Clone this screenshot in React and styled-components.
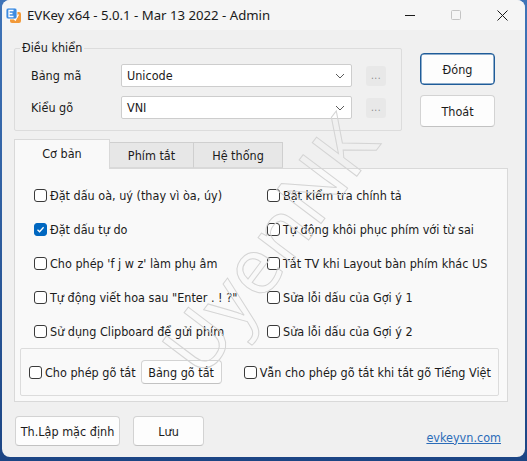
import { Fragment } from "react";
import styled, { createGlobalStyle } from "styled-components";

const GlobalStyle = createGlobalStyle`
  html, body {
    margin: 0;
    padding: 0;
  }
  body {
    width: 527px;
    height: 461px;
    overflow: hidden;
    background: linear-gradient(180deg, #3f74b8 0%, #1c4584 100%);
    font-family: "DejaVu Sans Condensed", "Noto Sans", sans-serif;
    font-size: 12.5px;
    color: #1b1b1b;
  }
`;

const Window = styled.div`
  width: 523px;
  height: 457px;
  margin-left: 2px;
  background: #f0f0f0;
  border-radius: 8px;
  overflow: hidden;
  display: flex;
  flex-direction: column;
  position: relative;
`;

const TitleBar = styled.div`
  height: 30px;
  flex-shrink: 0;
  display: flex;
  align-items: center;
  background: #f5f5f5;
  padding-left: 3px;
`;

const TitleText = styled.span`
  margin-left: 5px;
  font-family: "Noto Sans", sans-serif;
  font-size: 13.2px;
  color: #1a1a1a;
  flex: 1;
`;

const Controls = styled.div`
  display: flex;
  height: 30px;
`;

const ControlBtn = styled.div`
  width: 46px;
  height: 30px;
  display: flex;
  align-items: center;
  justify-content: center;
  color: ${(p) => (p.$disabled ? "#c4c4c4" : "#1a1a1a")};
`;

const Body = styled.div`
  padding: 10px 0 0 12px;
  display: flex;
  flex-direction: column;
`;

const TopRow = styled.div`
  display: flex;
  align-items: flex-start;
`;

const GroupBox = styled.fieldset`
  box-sizing: border-box;
  width: 388px;
  height: 91px;
  margin: 0;
  padding: 0;
  border: 1px solid #dcdcdc;
  border-radius: 2px;
`;

const Legend = styled.legend`
  margin-left: 5px;
  padding: 0 2px;
  line-height: 16px;
`;

const FieldRow = styled.div`
  display: flex;
  align-items: center;
  height: 23px;
  padding-left: 16px;
  margin-top: ${(p) => p.$top}px;
`;

const FieldLabel = styled.span`
  width: 90px;
`;

const Combo = styled.div`
  box-sizing: border-box;
  width: 231px;
  height: 23px;
  background: #fff;
  border: 1px solid #cdcdcd;
  border-radius: 2px;
  display: flex;
  align-items: center;
  justify-content: space-between;
  padding: 0 6px 0 5px;
`;

const DotsBtn = styled.div`
  width: 20px;
  height: 20px;
  margin-left: 14px;
  background: #e8e8e8;
  border-radius: 3px;
  color: #8a8a8a;
  font-size: 10px;
  display: flex;
  align-items: center;
  justify-content: center;
  letter-spacing: 0.5px;
`;

const SideButtons = styled.div`
  margin: 13px 0 0 18px;
  display: flex;
  flex-direction: column;
  gap: 10px;
`;

const Button = styled.div`
  box-sizing: border-box;
  width: ${(p) => p.$w}px;
  height: ${(p) => p.$h}px;
  margin-left: ${(p) => p.$ml || 0}px;
  background: #fdfdfd;
  border: 1px solid ${(p) => (p.$primary ? "#1f5c99" : "#d3d3d3")};
  border-bottom-color: ${(p) => (p.$primary ? "#1f5c99" : "#c2c2c2")};
  box-shadow: ${(p) => (p.$primary ? "inset 0 0 0 0.5px #1f5c99" : "none")};
  border-radius: 4px;
  display: flex;
  align-items: center;
  justify-content: center;
  flex-shrink: 0;
`;

const TabBar = styled.div`
  margin-top: 8px;
  height: 29px;
  display: flex;
  align-items: flex-end;
`;

const Tab = styled.div`
  box-sizing: border-box;
  width: ${(p) => p.$w}px;
  height: ${(p) => (p.$active ? 30 : 26)}px;
  margin-bottom: ${(p) => (p.$active ? -1 : 0)}px;
  background: ${(p) => (p.$active ? "#f9f9f9" : "#e7e7e7")};
  border: 1px solid ${(p) => (p.$active ? "#d9d9d9" : "#cfcfcf")};
  border-bottom: ${(p) => (p.$active ? "none" : "1px solid #d9d9d9")};
  border-left: ${(p) => (p.$first || p.$active ? undefined : "none")};
  display: flex;
  align-items: center;
  justify-content: center;
  padding-bottom: ${(p) => (p.$active ? 2 : 0)}px;
  position: relative;
  z-index: ${(p) => (p.$active ? 2 : 1)};
`;

const Panel = styled.div`
  box-sizing: border-box;
  width: 494px;
  height: 234px;
  background: #f9f9f9;
  border: 1px solid #d9d9d9;
  padding: 16px 5px 0 5px;
`;

const OptionGrid = styled.div`
  display: grid;
  grid-template-columns: 233px 1fr;
  row-gap: 14px;
  padding-left: 14px;
`;

const Option = styled.label`
  display: flex;
  align-items: center;
  height: 20px;
  gap: 3px;
  white-space: nowrap;
`;

const Box = styled.span`
  box-sizing: border-box;
  width: 13px;
  height: 13px;
  flex-shrink: 0;
  border-radius: 3px;
  border: 1px solid ${(p) => (p.$checked ? "#0067c0" : "#3a3a3a")};
  background: ${(p) => (p.$checked ? "#0067c0" : "#fff")};
  display: flex;
  align-items: center;
  justify-content: center;
`;

const InnerGroup = styled.div`
  box-sizing: border-box;
  margin-top: 7px;
  height: 48px;
  width: 479px;
  border: 1px solid #dcdcdc;
  border-radius: 2px;
  display: flex;
  align-items: center;
  padding-left: 8px;
`;

const Spacer = styled.span`
  width: ${(p) => p.$w}px;
`;

const Watermark = styled.div`
  position: absolute;
  left: 266px;
  top: 244px;
  transform: translate(-50%, -50%) rotate(-53deg);
  font-family: "Noto Sans", sans-serif;
  font-size: 78px;
  line-height: 1;
  color: transparent;
  -webkit-text-stroke: 1px #d4d4d4;
  pointer-events: none;
  white-space: nowrap;
`;

const BottomRow = styled.div`
  margin-top: 14px;
  display: flex;
  align-items: center;
  gap: 13px;
  padding-left: 1px;
  padding-right: 24px;
`;

const Link = styled.a`
  margin-left: auto;
  margin-top: 12px;
  color: #2b6cb8;
  text-decoration: underline;
`;

const Check = ({ checked, children }) => (
  <Option>
    <Box $checked={checked}>
      {checked && (
        <svg width="9" height="9" viewBox="0 0 9 9">
          <path d="M1.5 4.7 L3.6 6.7 L7.6 2.3" fill="none" stroke="#fff" strokeWidth="1.3" />
        </svg>
      )}
    </Box>
    {children}
  </Option>
);

const Chevron = () => (
  <svg width="10" height="6" viewBox="0 0 10 6">
    <path d="M1 1 L5 5 L9 1" fill="none" stroke="#5a5a5a" strokeWidth="1" />
  </svg>
);

const AppIcon = () => (
  <svg width="17" height="17" viewBox="0 0 17 17">
    <rect x="5" y="5" width="11" height="11" rx="2" fill="#f29a3a" />
    <path d="M8 10 L10.3 13 L13.5 7.5" fill="none" stroke="#fff" strokeWidth="1.4" />
    <rect x="1" y="1" width="11" height="11" rx="2" fill="#3d8be0" stroke="#fff" strokeWidth="0.8" />
    <path d="M8.5 3.5 H4 V9.5 H8.5 M4 6.5 H7.5" fill="none" stroke="#fff" strokeWidth="1.3" />
  </svg>
);

const App = () => {
  const left = [
    { text: "Đặt dấu oà, uý (thay vì òa, úy)" },
    { text: "Đặt dấu tự do", checked: true },
    { text: "Cho phép 'f j w z' làm phụ âm" },
    { text: 'Tự động viết hoa sau "Enter . ! ?"' },
    { text: "Sử dụng Clipboard để gửi phím" },
  ];
  const right = [
    "Bật kiểm tra chính tả",
    "Tự động khôi phục phím với từ sai",
    "Tắt TV khi Layout bàn phím khác US",
    "Sửa lỗi dấu của Gợi ý 1",
    "Sửa lỗi dấu của Gợi ý 2",
  ];

  return (
    <>
      <GlobalStyle />
      <Window>
        <TitleBar>
          <AppIcon />
          <TitleText>EVKey x64 - 5.0.1 - Mar 13 2022 - Admin</TitleText>
          <Controls>
            <ControlBtn>
              <svg width="10" height="10" viewBox="0 0 10 10">
                <path d="M0 5.5 H10" stroke="currentColor" strokeWidth="1" />
              </svg>
            </ControlBtn>
            <ControlBtn $disabled>
              <svg width="10" height="10" viewBox="0 0 10 10">
                <rect x="0.5" y="0.5" width="9" height="9" rx="1" fill="none" stroke="currentColor" />
              </svg>
            </ControlBtn>
            <ControlBtn>
              <svg width="11" height="11" viewBox="0 0 11 11">
                <path d="M0.5 0.5 L10.5 10.5 M10.5 0.5 L0.5 10.5" stroke="currentColor" strokeWidth="1" />
              </svg>
            </ControlBtn>
          </Controls>
        </TitleBar>

        <Body>
          <TopRow>
            <GroupBox>
              <Legend>Điều khiển</Legend>
              <FieldRow $top={8}>
                <FieldLabel>Bảng mã</FieldLabel>
                <Combo>
                  Unicode
                  <Chevron />
                </Combo>
                <DotsBtn>...</DotsBtn>
              </FieldRow>
              <FieldRow $top={9}>
                <FieldLabel>Kiểu gõ</FieldLabel>
                <Combo>
                  VNI
                  <Chevron />
                </Combo>
                <DotsBtn>...</DotsBtn>
              </FieldRow>
            </GroupBox>
            <SideButtons>
              <Button $w={75} $h={32} $primary>
                Đóng
              </Button>
              <Button $w={75} $h={32}>
                Thoát
              </Button>
            </SideButtons>
          </TopRow>

          <TabBar>
            <Tab $w={96} $active $first>
              Cơ bản
            </Tab>
            <Tab $w={84}>Phím tắt</Tab>
            <Tab $w={89}>Hệ thống</Tab>
          </TabBar>

          <Panel>
            <OptionGrid>
              {left.map((item, i) => (
                <Fragment key={`opt${i}`}>
                  <Check checked={item.checked}>{item.text}</Check>
                  <Check>{right[i]}</Check>
                </Fragment>
              ))}
            </OptionGrid>
            <InnerGroup>
              <Check>Cho phép gõ tắt</Check>
              <Button $w={81} $h={24} $ml={5}>
                Bảng gõ tắt
              </Button>
              <Spacer $w={22} />
              <Check>Vẫn cho phép gõ tắt khi tắt gõ Tiếng Việt</Check>
            </InnerGroup>
          </Panel>

          <BottomRow>
            <Button $w={105} $h={30}>
              Th.Lập mặc định
            </Button>
            <Button $w={71} $h={30}>
              Lưu
            </Button>
            <Link href="#">evkeyvn.com</Link>
          </BottomRow>
        </Body>
        <Watermark>UyenNK</Watermark>
      </Window>
    </>
  );
};

export default App;
